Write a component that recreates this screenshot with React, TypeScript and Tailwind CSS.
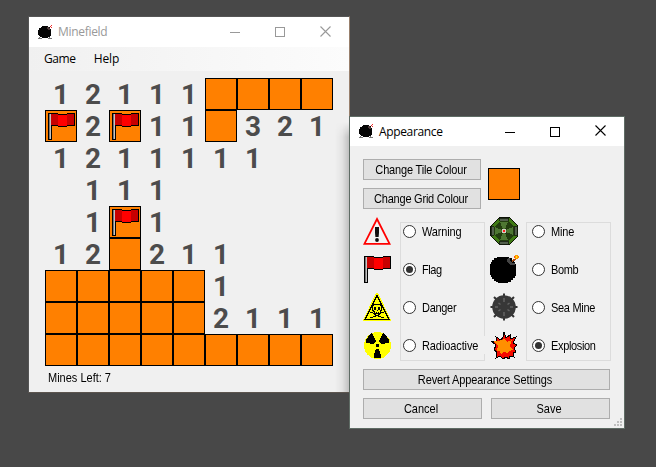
import React from "react";

const GRID = [
  "12111TTTT",
  "F2F11T321",
  "1211111..",
  ".111.....",
  ".1F1.....",
  "12T211...",
  "TTTTT1...",
  "TTTTT2111",
  "TTTTTTTTT",
];

const UI = "font-['Open_Sans','Noto_Sans',sans-serif]";
const SMALL = "block origin-center scale-y-108 font-['Liberation_Sans',sans-serif] text-[11px] leading-[13px] whitespace-nowrap text-black";

function Flag({ className = "" }: { className?: string }) {
  return (
    <svg width="27" height="27" viewBox="0 0 27 27" shapeRendering="crispEdges" className={`block ${className}`}>
      <path d="M0 0H10V1H19V0H27V13H19V14H10V13H4V27H0Z" fill="#000" />
      <rect x="1" y="1" width="1" height="25" fill="#777" />
      <rect x="2" y="1" width="1" height="25" fill="#c4c4c4" />
      <rect x="3" y="1" width="7" height="11" fill="#c80000" />
      <rect x="10" y="2" width="9" height="11" fill="#f00" />
      <rect x="19" y="1" width="7" height="11" fill="#c80000" />
    </svg>
  );
}

function Warning() {
  return (
    <svg width="28" height="28" viewBox="0 0 28 28" className="block">
      <path d="M14 2L26.6 26.9H1.4Z" fill="#f4f4f4" stroke="#f00" strokeWidth="1.8" />
      <path d="M12 10h4v6l-.4 4h-3.200L12 16Z" fill="#111" />
      <circle cx="14" cy="23" r="1.9" fill="#111" />
    </svg>
  );
}

function Danger() {
  return (
    <svg width="28" height="28" viewBox="0 0 28 28" shapeRendering="crispEdges" className="block">
      <path d="M13 0h2l13 27v1H0v-1z" fill="#ff0" />
      <path d="M14 2.500L26 26.500H2Z" fill="#ff0" stroke="#000" strokeWidth="1.2" />
      <path d="M11 11.500h6l1.500 1.500v4l-1.500 1.500v2h-6v-2l-1.500-1.500v-4z" fill="none" stroke="#000" />
      <path d="M11 14h2v3h-2zM15 14h2v3h-2zM13.500 17h1v1h-1zM13 19h1v2h-1zM15 19h1v2h-1z" fill="#000" />
      <path d="M7 19.500h2l4 2.500 6 2.500h2M21 19.500h-2l-4 2.500-6 2.500H7" fill="none" stroke="#000" />
    </svg>
  );
}

function Radioactive() {
  return (
    <svg width="28" height="28" viewBox="0 0 28 28" shapeRendering="crispEdges" className="block">
      <circle cx="14.500" cy="14.500" r="13.500" fill="#ff0" />
      <path d="M3 12V9l2-3 2-3 2-1 4 8-2 3zM26 12V9l-2-3-2-3-2-1-4 8 2 3zM13 18h3l2 6v3h-7v-3z" fill="#000" />
      <rect x="13" y="13" width="3" height="3" fill="#000" />
    </svg>
  );
}

function Mine() {
  return (
    <svg width="28" height="28" viewBox="0 0 28 28" shapeRendering="crispEdges" className="block">
      <path d="M9 0h10l9 9v10l-9 9H9l-9-9V9Z" fill="#0b1205" />
      <path d="M9 1h10l8 8v10l-8 8H9l-8-8V9Z" fill="#3f7a14" />
      <path d="M9 1h10l-1 3h-8zM27 9v10l-3-1v-8zM9 27h10l-1-3h-8zM1 9v10l3-1v-8z" fill="#525f4c" stroke="#141d0c" strokeWidth=".8" />
      <path d="M10 4h8l6 6v8l-6 6h-8l-6-6v-8z" fill="#223c0f" />
      <path d="M10 5h8l-3 7h-2zM23 10v8l-7-3v-2zM10 23h8l-3-7h-2zM5 10v8l7-3v-2z" fill="#4e7733" />
      <rect x="12" y="12" width="4" height="4" fill="#d5d0c5" />
      <rect x="13" y="13" width="2" height="2" fill="#f22" />
    </svg>
  );
}

function Bomb() {
  return (
    <svg width="29" height="28" viewBox="0 0 29 28" shapeRendering="crispEdges" className="block">
      <path d="M7 2h12v1h3v2h2v2h1v2h1v12h-1v2h-2v2h-2v2h-3v1H8v-1H6v-1H4v-2H2v-2H1v-2H0V9h1V7h1V5h2V3h3z" fill="#000" />
      <path d="M18 3h2v3l2 2h3v2h-4l-2-1-2-3z" fill="#444" />
      <path d="M22 5h1v-1h2v-1h1v2h-1v1h-2v1h-1z" fill="#a34a16" />
      <rect x="25" y="0" width="3" height="4" fill="#ff9a00" />
      <rect x="24" y="1" width="1" height="2" fill="#f51" />
      <rect x="28" y="1" width="1" height="2" fill="#f80" />
      <rect x="26" y="1" width="1" height="2" fill="#ffe71a" />
    </svg>
  );
}

function SeaMine() {
  return (
    <svg width="28" height="28" viewBox="0 0 28 28" className="block">
      <g stroke="#333" strokeWidth="2">
        <path d="M14 .5v27M.5 14h27M4 4l20 20M24 4L4 24" />
      </g>
      <circle cx="14" cy="14" r="11.800" fill="#373737" />
      <path d="M14 5v4M14 19v4M5 14h3M20 14h3M8.500 10l2 1.500M19.500 10l-2 1.500M8.500 18l2-1.500M19.500 18l-2-1.500" stroke="#646464" strokeWidth="1.500" />
    </svg>
  );
}

function Explosion() {
  return (
    <svg width="28" height="28" viewBox="0 0 28 28" shapeRendering="crispEdges" className="block">
      <path d="M14 1l2 6 4-3v4l6-2-3 6 4 2-3 3 2 4-3 1 1 4-4-1-1 3-3-2-3 2-3-3-4 2 1-6-3-2 2-5-5-4h6l-1-4 5 3 2-3z" fill="#f50a00" stroke="#000" />
      <path d="M14 8l3 3 5-2-2 6 3 4-4 1-1 2-4-1-3 2-1-3-3 0 1-5-5-5 6 0z" fill="#ff8f00" />
    </svg>
  );
}

function AppIcon() {
  return (
    <svg width="15" height="15" viewBox="0 0 15 15" shapeRendering="crispEdges" className="block">
      <path d="M4 1h6v1h2v2h1v7h-1v1h-2v1H4v-1H2v-1H1v-1H0V5h1V3h2V2h1z" fill="#050505" />
      <path d="M9 2h2v1h1v2h-2V4H9z" fill="#4a3838" />
      <path d="M12 1h1v1h-1zM13 0h1v1h-1zM13 2h1v1h-1z" fill="#ed3030" />
      <path d="M0 13h1v-1h1v1h2v1H0zM10 13h1v-1h1v1h2v1h-4z" fill="#777" />
    </svg>
  );
}

function Controls({ className }: { className: string }) {
  return (
    <div className={`flex items-center gap-[35px] ${className}`}>
      <svg width="10" height="10" shapeRendering="crispEdges"><path d="M0 5.500h10" stroke="currentColor" /></svg>
      <svg width="10" height="10" shapeRendering="crispEdges"><path d="M.5.5h9v9h-9z" fill="none" stroke="currentColor" /></svg>
      <svg width="11" height="11" className="relative -top-px"><path d="M.5.5l10 10M10.500.5l-10 10" stroke="currentColor" strokeWidth="1.1" /></svg>
    </div>
  );
}

function Cell({ c }: { c: string }) {
  if (c === "T" || c === "F")
    return (
      <div className="h-8 w-8 border border-black bg-[#ff8000]">
        {c === "F" && <Flag className="mt-[2px] ml-[2px]" />}
      </div>
    );
  return (
    <div className="flex h-8 w-8 items-center justify-center pt-[2px] font-['Roboto',sans-serif] text-[28px] leading-[30px] font-bold text-[#4c4c4c]">
      {c === "." ? "" : c}
    </div>
  );
}

function Button({ label, className, text }: { label: string; className: string; text: string }) {
  return (
    <button className={`flex h-[21px] items-center justify-center border border-[#adadad] bg-[#e1e1e1] ${className}`}>
      <span className={`${SMALL} ${text}`}>{label}</span>
    </button>
  );
}

function Radio({ label, on = false, text = "" }: { label: string; on?: boolean; text?: string }) {
  return (
    <label className="flex h-[13px] items-center gap-[6px]">
      <svg width="13" height="13" className="shrink-0">
        <circle cx="6.500" cy="6.500" r="6" fill="#fff" stroke="#333" />
        {on && <circle cx="6.500" cy="6.500" r="3.500" fill="#333" />}
      </svg>
      <span className={`${SMALL} mt-px ${text}`}>{label}</span>
    </label>
  );
}

export default function App() {
  return (
    <div className="relative h-[467px] w-[656px] overflow-hidden bg-[#484848]">
      <section className="absolute top-4 left-7 flex h-[377px] w-[322px] flex-col border border-t-[#555] border-r-[#98806d] border-b-[#5c554f] border-l-[#555] bg-[#f0f0f0]">
        <header className="flex h-[30px] shrink-0 items-center bg-white pl-[9px]">
          <AppIcon />
          <span className={`${UI} ml-[5px] text-[12px] leading-4 tracking-[-0.3px] text-[#999]`}>Minefield</span>
          <Controls className="ml-auto pr-[18px] text-[#999]" />
        </header>
        <nav className={`${UI} flex h-6 shrink-0 items-center gap-[18px] bg-linear-to-r from-[#f0f0f0] to-[#fcfcfc] pl-[15px] text-[12px] leading-4 text-black`}>
          <span className="tracking-[-0.4px]">Game</span>
          <span className="tracking-[-0.1px]">Help</span>
        </nav>
        <div className="mt-[7px] ml-4 grid w-72 grid-cols-9">
          {GRID.flatMap((row, r) => row.split("").map((c, i) => <Cell key={`${r}-${i}`} c={c} />))}
        </div>
        <div className={`${SMALL} mt-[6px] ml-[19px] self-start`}>Mines Left: 7</div>
      </section>

      <div className="absolute top-[122px] left-[335px] h-[270px] w-[14px] bg-linear-to-r from-transparent via-black/5 to-black/20 mask-t-from-[255px] mask-t-to-[270px]" />

      <section className="absolute top-[116px] left-[349px] flex h-[313px] w-[276px] flex-col border border-[#5f6c65] bg-[#f0f0f0]">
        <header className="flex h-[29px] shrink-0 items-center bg-white pl-[9px]">
          <AppIcon />
          <span className={`${UI} ml-[5px] text-[12px] leading-4 tracking-[-0.35px] text-black`}>Appearance</span>
          <Controls className="ml-auto pr-[18px] text-black" />
        </header>
        <main className="flex flex-col px-[13px] pt-[13px]">
          <div className="flex">
            <div className="flex flex-col gap-2">
              <Button label="Change Tile Colour" className="w-[118px] pr-[2px]" text="mt-px tracking-[-0.16px]" />
              <Button label="Change Grid Colour" className="w-[118px] pr-[2px]" text="mt-px tracking-[-0.22px]" />
            </div>
            <div className="mt-[9px] ml-[7px] h-8 w-8 border border-black bg-[#ff8000]" />
          </div>
          <div className="mt-2 flex">
            <div className="flex w-[37px] flex-col gap-[10px]">
              <Warning />
              <div className="h-7 pt-px pl-px"><Flag /></div>
              <Danger />
              <Radioactive />
            </div>
            <div className="mt-[5px] flex h-[139px] w-[85px] flex-col gap-[25px] border border-[#dcdcdc] pt-[2px] pl-[2px]">
              <Radio label="Warning" text="tracking-[-0.15px]" />
              <Radio label="Flag" on text="tracking-[-0.4px]" />
              <Radio label="Danger" text="tracking-[-0.3px]" />
              <Radio label="Radioactive" text="tracking-[-0.1px]" />
            </div>
            <div className="-ml-[2px] flex w-[43px] flex-col gap-[10px]">
              <div className="h-7 pl-[7px]"><Mine /></div>
              <div className="h-7 pl-[7px]"><Bomb /></div>
              <div className="h-7 pl-[7px]"><SeaMine /></div>
              <div className="mt-[5px] h-[18px] bg-[#f0f0f0] pl-[7px]"><div className="-mt-[5px]"><Explosion /></div></div>
            </div>
            <div className="mt-[5px] flex h-[139px] w-[85px] flex-col gap-[25px] border border-[#dcdcdc] pt-[2px] pl-[5px]">
              <Radio label="Mine" text="tracking-[-0.15px]" />
              <Radio label="Bomb" text="tracking-[-0.4px]" />
              <Radio label="Sea Mine" text="tracking-[-0.3px]" />
              <Radio label="Explosion" on text="tracking-[-0.35px]" />
            </div>
          </div>
          <Button label="Revert Appearance Settings" className="mt-2 w-[247px] pr-[3px]" text="mt-px tracking-[-0.1px]" />
          <div className="mt-2 flex gap-[9px]">
            <Button label="Cancel" className="w-[119px] pr-[3px]" text="mt-px" />
            <Button label="Save" className="w-[119px] pr-[3px]" text="mt-px" />
          </div>
        </main>
        <svg width="8" height="8" shapeRendering="crispEdges" className="absolute right-[2px] bottom-[2px]">
          <path d="M6 0h2v2H6zM3 3h2v2H3zM6 3h2v2H6zM0 6h2v2H0zM3 6h2v2H3zM6 6h2v2H6z" fill="#bfbfbf" />
        </svg>
      </section>
    </div>
  );
}
